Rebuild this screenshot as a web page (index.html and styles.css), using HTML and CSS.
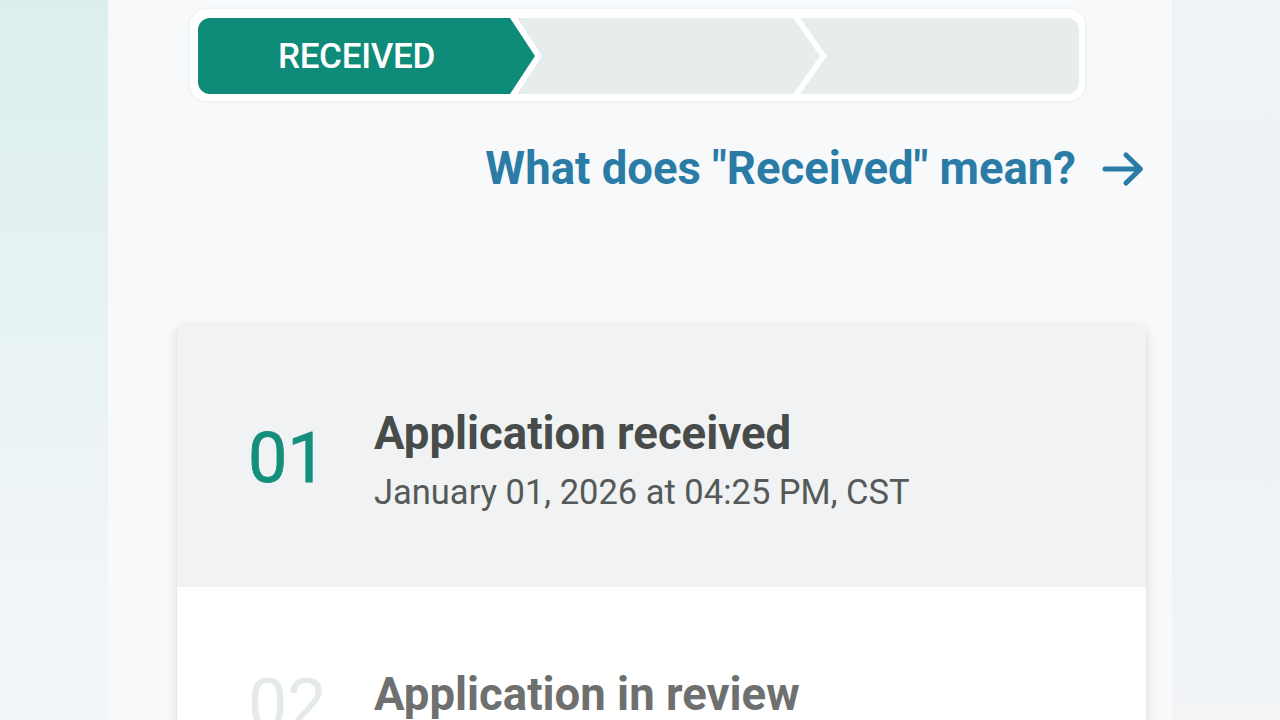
FILE: index.html
```html
<!DOCTYPE html>
<html lang="en">
<head>
<meta charset="utf-8">
<title>Application status</title>
<link rel="stylesheet" href="styles.css">
</head>
<body>
<div class="page">
  <div class="side side-left"></div>
  <main class="panel">
    <div class="stepper">
      <div class="seg seg-first"><span class="seg-label">RECEIVED</span></div>
      <div class="seg seg-mid"></div>
      <div class="seg seg-last"></div>
    </div>
    <div class="help-row">
      <a class="help-link" href="#">What does "Received" mean?
        <svg class="help-arrow" width="44" height="42" viewBox="0 0 44 42" aria-hidden="true">
          <path d="M4 21 H39 M25 7 L39.5 21 L25 35" fill="none" stroke="#2a7ca7" stroke-width="5" stroke-linecap="round" stroke-linejoin="round"/>
        </svg>
      </a>
    </div>
    <section class="card">
      <div class="row row-active">
        <div class="num num-active">01</div>
        <div class="info">
          <div class="title">Application received</div>
          <div class="date">January 01, 2026 at 04:25 PM, CST</div>
        </div>
      </div>
      <div class="row row-pending">
        <div class="num num-pending">02</div>
        <div class="info">
          <div class="title title-pending">Application in review</div>
        </div>
      </div>
    </section>
  </main>
  <div class="side side-right"></div>
</div>
</body>
</html>
```

FILE: styles.css
```css
html, body {
  margin: 0;
  padding: 0;
  height: 100%;
  overflow: hidden;
}
body {
  font-family: Roboto, "Liberation Sans", Arial, sans-serif;
}
.page {
  display: flex;
  width: 1280px;
  height: 720px;
}
.side {
  width: 108px;
  flex: none;
}
.side-left {
  background: linear-gradient(180deg, #dcefee 0%, #e6f2f2 40%, #f1f5f7 80%, #f3f6f8 100%);
}
.side-right {
  background: linear-gradient(180deg, #f0f3f6 0%, #eef2f5 50%, #f2f4f6 100%);
}
.panel {
  width: 1064px;
  flex: none;
  background: #f7f9fb;
  display: flex;
  flex-direction: column;
}
.stepper {
  margin: 9px 0 0 82px;
  width: 879px;
  padding: 9px 8px 7px 8px;
  background: #ffffff;
  border-radius: 16px;
  display: flex;
  box-shadow: 0 0 3px rgba(200, 215, 220, 0.5);
}
.seg {
  height: 76px;
  flex: none;
}
.seg-first {
  width: 337px;
  background: #0f8b79;
  border-radius: 12px 0 0 12px;
  clip-path: polygon(0 0, calc(100% - 25px) 0, 100% 50%, calc(100% - 25px) 100%, 0 100%);
  display: flex;
  align-items: center;
  justify-content: center;
  padding-right: 20px;
  box-sizing: border-box;
}
.seg-label {
  color: #ffffff;
  font-size: 35px;
  font-weight: 500;
  letter-spacing: -0.3px;
}
.seg-mid {
  width: 303px;
  margin-left: -18px;
  background: #e7eded;
  clip-path: polygon(0 0, calc(100% - 27px) 0, 100% 50%, calc(100% - 27px) 100%, 0 100%, 25px 50%);
}
.seg-last {
  width: 279px;
  margin-left: -20px;
  background: #e7eded;
  border-radius: 0 12px 12px 0;
  clip-path: polygon(0 0, 100% 0, 100% 100%, 0 100%, 27px 50%);
}
.help-row {
  display: flex;
  justify-content: flex-end;
  padding: 42px 27px 0 0;
}
.help-link {
  display: flex;
  align-items: center;
  gap: 25px;
  color: #2a7ca7;
  font-size: 45.5px;
  font-weight: 700;
  text-decoration: none;
  line-height: 52px;
}
.help-arrow {
  flex: none;
}
.card {
  margin: 130px 26px 0 69px;
  background: #ffffff;
  border-radius: 8px 8px 0 0;
  box-shadow: 0 3px 12px rgba(0, 0, 0, 0.13), 0 0 2px rgba(0, 0, 0, 0.07);
  overflow: hidden;
}
.row {
  display: flex;
  align-items: center;
  padding-left: 71px;
}
.row-active {
  background: #f0f2f4;
  height: 262px;
  padding-top: 8px;
  box-sizing: border-box;
}
.row-pending {
  background: #ffffff;
  align-items: flex-start;
  padding-top: 82px;
  height: 200px;
  box-sizing: border-box;
}
.num {
  width: 126px;
  flex: none;
  font-size: 70px;
  line-height: 1;
  font-weight: 400;
}
.num-active {
  color: #148f7c;
  -webkit-text-stroke: 0.8px #148f7c;
  margin-top: -4px;
}
.num-pending {
  color: #e4eaea;
  margin-top: 0;
}
.title {
  font-size: 45.5px;
  font-weight: 700;
  color: #474b49;
  line-height: 52px;
}
.title-pending {
  color: #6e7070;
}
.date {
  margin-top: 12px;
  font-size: 34.5px;
  color: #555957;
  line-height: 40px;
}
```
